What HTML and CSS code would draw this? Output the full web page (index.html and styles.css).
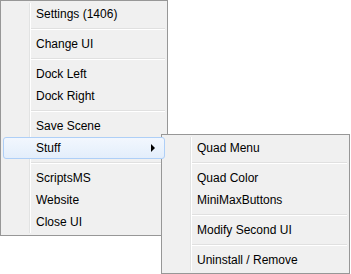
FILE: index.html
```html
<!DOCTYPE html>
<html>
<head>
<meta charset="utf-8">
<link rel="stylesheet" href="styles.css">
</head>
<body>
<div class="menu main">
  <div class="item">Settings (1406)</div>
  <div class="sep"></div>
  <div class="item">Change UI</div>
  <div class="sep"></div>
  <div class="item">Dock Left</div>
  <div class="item">Dock Right</div>
  <div class="sep"></div>
  <div class="item">Save Scene</div>
  <div class="item hot">Stuff<span class="arrow"></span></div>
  <div class="sep"></div>
  <div class="item">ScriptsMS</div>
  <div class="item">Website</div>
  <div class="item">Close UI</div>
</div>
<div class="menu sub">
  <div class="item">Quad Menu</div>
  <div class="sep"></div>
  <div class="item">Quad Color</div>
  <div class="item">MiniMaxButtons</div>
  <div class="sep"></div>
  <div class="item">Modify Second UI</div>
  <div class="sep"></div>
  <div class="item">Uninstall / Remove</div>
</div>
</body>
</html>
```
FILE: styles.css
```css
html, body {
  margin: 0;
  padding: 0;
  background: #ffffff;
}
body {
  width: 351px;
  height: 274px;
  position: relative;
  overflow: hidden;
  font-family: "Liberation Sans", Arial, sans-serif;
  font-size: 12px;
  color: #000000;
}
.menu {
  box-sizing: border-box;
  border: 1px solid #979797;
  background: #f0f0f0;
  padding: 2px;
  position: relative;
}
.menu::before {
  content: "";
  position: absolute;
  top: 2px;
  bottom: 2px;
  left: 28px;
  width: 1px;
  background: #e2e3e3;
  border-right: 1px solid #ffffff;
}
.main {
  width: 168px;
}
.sub {
  position: absolute;
  left: 161px;
  top: 134px;
  width: 189px;
}
.item {
  position: relative;
  height: 22px;
  line-height: 22px;
  padding-left: 33px;
  white-space: nowrap;
}
.sep {
  height: 1px;
  margin: 3px 0 3px 28px;
  background: #e0e0e0;
  border-bottom: 1px solid #ffffff;
}
.hot {
  box-sizing: border-box;
  border: 1px solid #aecff7;
  border-radius: 3px;
  background: linear-gradient(#f2f7fe, #e3eefb);
  line-height: 20px;
  padding-left: 32px;
  z-index: 1;
}
.arrow {
  position: absolute;
  left: 147px;
  top: 6px;
  width: 0;
  height: 0;
  border-top: 4px solid transparent;
  border-bottom: 4px solid transparent;
  border-left: 4px solid #000000;
}
```
